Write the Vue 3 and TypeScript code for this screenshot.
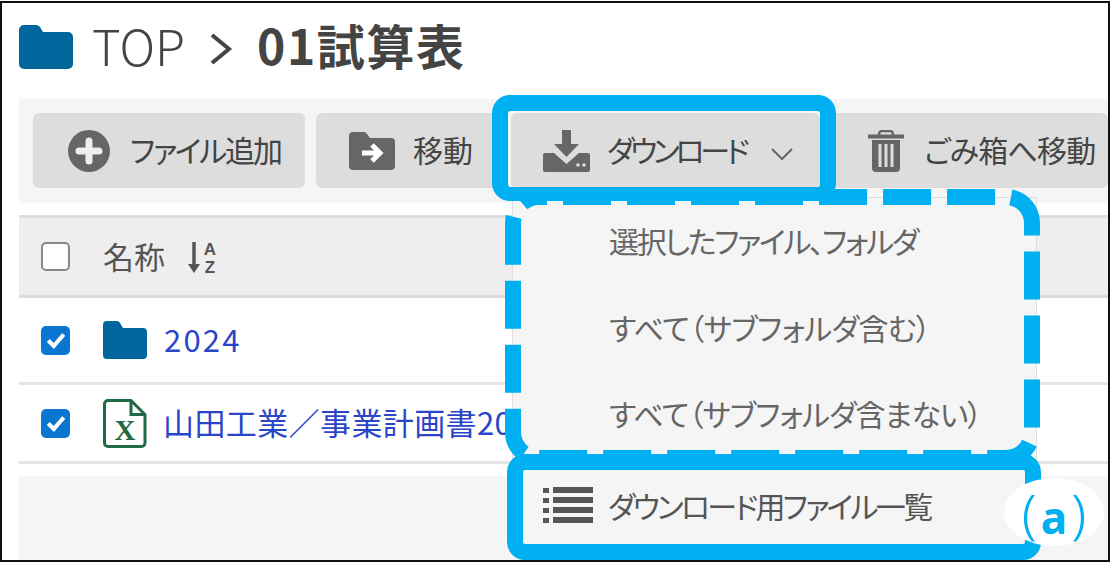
<template>
  <div class="page">
    <!-- breadcrumb -->
    <div class="title">
      <svg class="title-folder" viewBox="0 0 54 44">
        <path d="M0 5a5 5 0 0 1 5-5h12a5 5 0 0 1 4 2l3 5h25a5 5 0 0 1 5 5v27a5 5 0 0 1-5 5H5a5 5 0 0 1-5-5z" fill="#00669b" />
      </svg>
      <span class="top">TOP</span>
      <svg class="crumb-sep" viewBox="0 0 24 34">
        <path d="M3 3l17 14L3 31" fill="none" stroke="#444" stroke-width="4" />
      </svg>
      <span class="current">01試算表</span>
    </div>

    <!-- toolbar -->
    <div class="toolbar">
      <button class="btn add">
        <svg class="ico" width="42" height="42" viewBox="0 0 42 42">
          <circle cx="21" cy="21" r="21" fill="#666" />
          <path d="M21 11v20M11 21h20" stroke="#eee" stroke-width="7" stroke-linecap="round" />
        </svg>
        <span>ファイル追加</span>
      </button>
      <button class="btn move">
        <svg class="ico" width="46" height="38" viewBox="0 0 46 38">
          <path d="M0 4a4 4 0 0 1 4-4h11a4 4 0 0 1 3 2l3 4h21a4 4 0 0 1 4 4v24a4 4 0 0 1-4 4H4a4 4 0 0 1-4-4z" fill="#666" />
          <path d="M13 21h17M23 13l8 8-8 8" fill="none" stroke="#fff" stroke-width="5" />
        </svg>
        <span>移動</span>
      </button>
      <button class="btn down">
        <svg class="ico" width="47" height="42" viewBox="0 0 47 42">
          <path d="M19 0h9v14h8L23.500 27 11 14h8z" fill="#666" />
          <path d="M2 23h9l12.500 11L36 23h9a2 2 0 0 1 2 2v15a2 2 0 0 1-2 2H2a2 2 0 0 1-2-2V25a2 2 0 0 1 2-2z" fill="#666" />
          <circle cx="35" cy="35" r="1.800" fill="#ddd" />
          <circle cx="41" cy="35" r="1.800" fill="#ddd" />
        </svg>
        <span class="down-text">ダウンロード</span>
        <svg class="chev" width="22" height="12" viewBox="0 0 22 12">
          <path d="M1 1l10 10L21 1" fill="none" stroke="#666" stroke-width="2" />
        </svg>
      </button>
      <button class="btn trash">
        <svg class="ico" width="36" height="42" viewBox="0 0 36 42">
          <path d="M11 6V4a3 3 0 0 1 3-3h8a3 3 0 0 1 3 3v2" fill="none" stroke="#666" stroke-width="2.500" />
          <path d="M0 6.500h36" stroke="#666" stroke-width="4" />
          <path d="M4 10h28v28a4 4 0 0 1-4 4H8a4 4 0 0 1-4-4z" fill="#666" />
          <path d="M12 14v23M18 14v23M24 14v23" stroke="#ddd" stroke-width="3" />
        </svg>
        <span>ごみ箱へ移動</span>
      </button>
    </div>

    <!-- file table -->
    <div class="thead">
      <span class="check"></span>
      <span class="thead-name">名称</span>
      <svg class="sort" width="30" height="38" viewBox="0 0 30 38">
        <path d="M6 1v26" stroke="#555" stroke-width="3.500" />
        <path d="M0 23h12L6 32z" fill="#555" />
        <text x="22" y="14" class="sort-t">A</text>
        <text x="22" y="32" class="sort-t">Z</text>
      </svg>
    </div>
    <div v-for="row in rows" :key="row.name" class="row" :class="row.kind">
      <span class="check on">
        <svg width="22" height="22" viewBox="0 0 20 20">
          <path d="M3 10.500l5 5L17 5" fill="none" stroke="#fff" stroke-width="3.800" />
        </svg>
      </span>
      <svg v-if="row.kind === 'folder'" class="row-ico" width="44" height="38" viewBox="0 0 44 38">
        <path d="M0 4a4 4 0 0 1 4-4h10a4 4 0 0 1 3 2l3 5h20a4 4 0 0 1 4 4v23a4 4 0 0 1-4 4H4a4 4 0 0 1-4-4z" fill="#00669b" />
      </svg>
      <svg v-else class="row-ico" width="44" height="49" viewBox="0 0 44 49">
        <path d="M5 1.500h23l14 14V44a3.500 3.500 0 0 1-3.500 3.500H5A3.500 3.500 0 0 1 1.500 44V5A3.500 3.500 0 0 1 5 1.500z" fill="#fff" stroke="#1f6b45" stroke-width="3" />
        <path d="M28 1.500V15.500h14" fill="none" stroke="#1f6b45" stroke-width="3" />
        <text x="22" y="41" class="xls">X</text>
      </svg>
      <span class="row-name">{{ row.name }}</span>
    </div>
    <div class="foot"></div>

    <!-- dropdown + callouts, numbers are reference coords -->
    <div class="overlay">
      <div class="menu">
        <div v-for="item in menuItems" :key="item.text" class="menu-item" :style="{ letterSpacing: item.spacing }">
          <span>{{ item.text }}</span>
        </div>
        <div class="menu-item list-item">
          <svg class="list-ico" width="50" height="38" viewBox="0 0 50 38">
            <path d="M0 2h6v5H0zM0 12h6v5H0zM0 22h6v5H0zM0 32h6v5H0z" fill="#555" />
            <path d="M10 1h40v6H10zM10 11h40v6H10zM10 21h40v6H10zM10 31h40v6H10z" fill="#555" />
          </svg>
          <span class="list-text">ダウンロード用ファイル一覧</span>
        </div>
      </div>
      <svg class="dash" width="1111" height="565" viewBox="0 0 1111 565">
        <rect x="513" y="197" width="519" height="261" rx="26" fill="none" stroke="#00b0f0" stroke-width="16" stroke-dasharray="48 16" stroke-dashoffset="-24" />
      </svg>
      <div class="hl hl-down"></div>
      <div class="hl hl-list"></div>
      <div class="label"><span class="paren">(</span><span class="a">a</span><span class="paren">)</span></div>
    </div>
  </div>
</template>

<script setup lang="ts">
interface FileRow {
  kind: 'folder' | 'excel'
  name: string
}

const rows: FileRow[] = [
  { kind: 'folder', name: '2024' },
  { kind: 'excel', name: '山田工業／事業計画書2024.xlsx' },
]

const menuItems = [
  { text: '選択したファイル、フォルダ', spacing: '-2.2px' },
  { text: 'すべて（サブフォルダ含む）', spacing: '-0.6px' },
  { text: 'すべて（サブフォルダ含まない）', spacing: '-0.9px' },
]
</script>

<style scoped>
.page {
  position: relative;
  box-sizing: border-box;
  width: 1110px;
  height: 561px;
  margin-top: 1px;
  border: 2px solid #111;
  background: #fff;
  display: flex;
  flex-direction: column;
  font-family: "Noto Sans CJK JP", sans-serif;
  color: #444;
}
.title {
  height: 96px;
  flex: none;
  padding: 0 0 8px 17px;
  box-sizing: border-box;
  display: flex;
  align-items: center;
}
.title-folder { width: 54px; height: 44px; }
.top { margin: 0 0 6px 19px; font-size: 49px; line-height: 1; font-weight: 300; }
.crumb-sep { width: 24px; height: 34px; margin: 4px 0 0 24px; }
.current { margin: 0 0 6px 24px; font-size: 48px; line-height: 1; font-weight: 700; letter-spacing: 1.6px; }

.toolbar {
  flex: none;
  height: 104px;
  margin-left: 17px;
  padding: 14px 0 0 14px;
  box-sizing: border-box;
  background: #f5f5f5;
  display: flex;
  gap: 11px;
}
.btn {
  flex: none;
  height: 75px;
  border: 0;
  border-radius: 6px;
  background: #ddd;
  padding: 0;
  display: flex;
  align-items: center;
  font: inherit;
  font-size: 30px;
  font-feature-settings: "palt";
  color: #444;
  white-space: nowrap;
}
.btn span { margin-bottom: 4px; }
.add { width: 272px; padding-left: 35px; gap: 20px; letter-spacing: -2.2px; }
.move { width: 184px; padding-left: 33px; gap: 18px; }
.down { width: 309px; padding-left: 32px; gap: 17px; }
.down-text { letter-spacing: -4.2px; }
.chev { margin-left: 9px; margin-top: 6px; }
.trash { flex: 1; padding-left: 37px; gap: 20px; letter-spacing: -0.8px; }

.thead {
  flex: none;
  height: 83px;
  margin-top: 12px;
  margin-left: 17px;
  padding-left: 22px;
  box-sizing: border-box;
  border-top: 3px solid #ddd;
  border-bottom: 3px solid #ddd;
  background: #eee;
  display: flex;
  align-items: center;
  font-size: 31px;
}
.thead-name { margin: 0 0 2px 33px; color: #555; }
.sort { margin-left: 23px; margin-top: 6px; }
.sort-t { font-size: 17px; font-weight: 700; font-family: "Liberation Sans", sans-serif; fill: #555; text-anchor: middle; }

.check {
  flex: none;
  box-sizing: border-box;
  width: 29px;
  height: 29px;
  border: 2px solid #888;
  border-radius: 5px;
  background: #fff;
  display: flex;
  align-items: center;
  justify-content: center;
}
.check.on { border: 0; background: #0b76d0; }

.row {
  flex: none;
  box-sizing: border-box;
  margin-left: 17px;
  padding-left: 22px;
  border-bottom: 3px solid #e5e5e5;
  display: flex;
  align-items: center;
  font-size: 31px;
  color: #2b45c8;
  white-space: nowrap;
}
.row.folder { height: 87px; }
.row.excel { height: 79px; }
.row-ico { flex: none; margin-left: 33px; }
.row-name { margin: 0 0 4px 16px; letter-spacing: 0.4px; }
.row.folder .row-name { margin-left: 17px; letter-spacing: 2.2px; }
.xls { font-family: "Liberation Serif", serif; font-weight: 700; font-size: 29px; fill: #1f6b45; text-anchor: middle; }

.foot {
  flex: 1;
  margin-top: 12px;
  margin-left: 17px;
  background: #f5f5f5;
}

.overlay {
  position: absolute;
  left: -2px;
  top: -3px;
  width: 1111px;
  height: 565px;
  pointer-events: none;
}
.menu {
  position: absolute;
  left: 512px;
  top: 197px;
  width: 525px;
  height: 348px;
  box-sizing: border-box;
  border: 1px solid #ddd;
  background: #f5f5f5;
  font-size: 30px;
  font-feature-settings: "palt";
  color: #666;
  white-space: nowrap;
}
.menu-item {
  height: 85.500px;
  padding-left: 96px;
  display: flex;
  align-items: center;
  box-sizing: border-box;
}
.menu-item:first-child { margin-top: 1px; padding-bottom: 4px; }
.list-item {
  margin-top: 7px;
  padding-left: 30px;
  gap: 15px;
  color: #555;
}
.list-text { letter-spacing: -2.7px; }
.dash { position: absolute; left: 0; top: 0; }
.hl {
  position: absolute;
  box-sizing: border-box;
  border: 16px solid #00b0f0;
}
.hl-down {
  left: 492px;
  top: 95px;
  width: 344px;
  height: 106px;
  border-radius: 18px;
  border-bottom-width: 14px;
}
.hl-list {
  left: 507px;
  top: 454px;
  width: 534px;
  height: 106px;
  border-radius: 18px;
}
.label {
  position: absolute;
  left: 1004px;
  top: 478px;
  width: 100px;
  height: 68px;
  border-radius: 50%;
  background: #fff;
  color: #00b0f0;
  font-family: "Noto Sans", sans-serif;
  display: flex;
  align-items: center;
  justify-content: center;
  gap: 4px;
  font-size: 44px;
  font-weight: 700;
  line-height: 1;
}
.a { margin-top: 10px; }
.paren { font-size: 54px; font-weight: 300; }
</style>
